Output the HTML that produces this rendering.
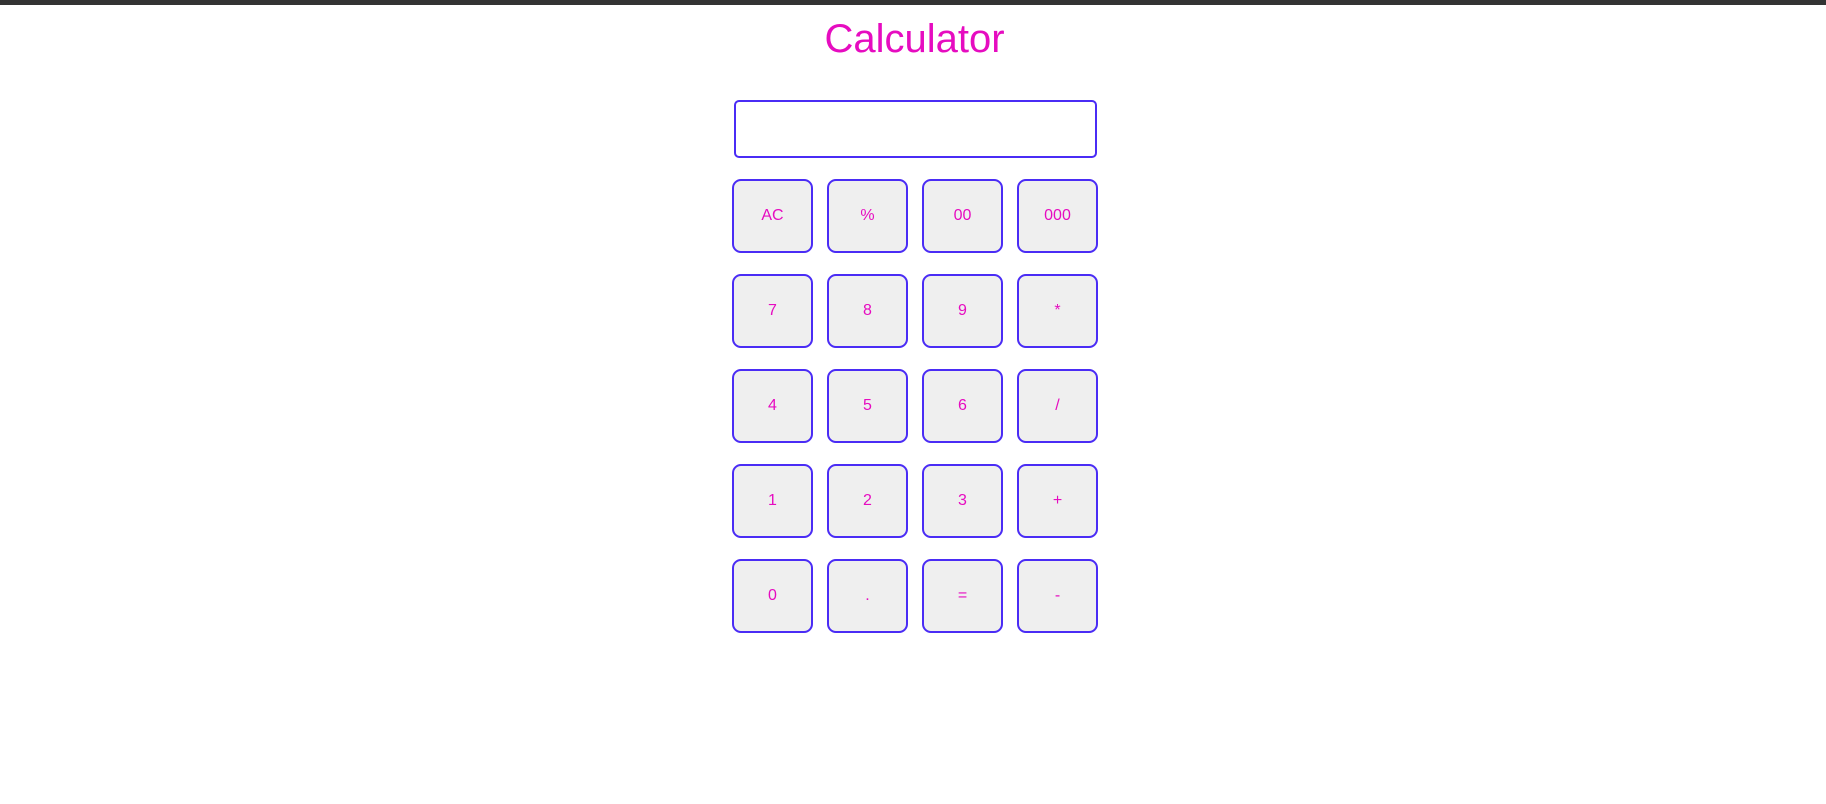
<!DOCTYPE html>
<html><head><style>
html,body{margin:0;padding:0;background:#fff;width:1826px;height:804px;overflow:hidden;font-family:"Liberation Sans",Arial,sans-serif}
.bar{position:absolute;left:0;top:0;width:1826px;height:5px;background:#333}
h1{position:absolute;left:0;width:1826px;top:15px;margin:0;text-align:center;font-weight:normal;font-size:40px;line-height:48px;color:#e60cc0;padding-left:3px;box-sizing:border-box}
.disp{position:absolute;left:734px;top:100px;width:363px;height:58px;box-sizing:border-box;border:2px solid #4a2cf5;border-radius:5px;background:#fff}
.b{position:absolute;width:81px;height:74px;box-sizing:border-box;border:2px solid #4a2cf5;border-radius:9px;background:#efefef;color:#e60cc0;font-size:16px;display:flex;align-items:center;justify-content:center}
</style></head><body>
<div class="bar"></div>
<h1>Calculator</h1>
<div class="disp"></div>
<div class="b" style="left:732px;top:179px">AC</div>
<div class="b" style="left:827px;top:179px">%</div>
<div class="b" style="left:922px;top:179px">00</div>
<div class="b" style="left:1017px;top:179px">000</div>
<div class="b" style="left:732px;top:274px">7</div>
<div class="b" style="left:827px;top:274px">8</div>
<div class="b" style="left:922px;top:274px">9</div>
<div class="b" style="left:1017px;top:274px">*</div>
<div class="b" style="left:732px;top:369px">4</div>
<div class="b" style="left:827px;top:369px">5</div>
<div class="b" style="left:922px;top:369px">6</div>
<div class="b" style="left:1017px;top:369px">/</div>
<div class="b" style="left:732px;top:464px">1</div>
<div class="b" style="left:827px;top:464px">2</div>
<div class="b" style="left:922px;top:464px">3</div>
<div class="b" style="left:1017px;top:464px">+</div>
<div class="b" style="left:732px;top:559px">0</div>
<div class="b" style="left:827px;top:559px">.</div>
<div class="b" style="left:922px;top:559px">=</div>
<div class="b" style="left:1017px;top:559px">-</div>
</body></html>
